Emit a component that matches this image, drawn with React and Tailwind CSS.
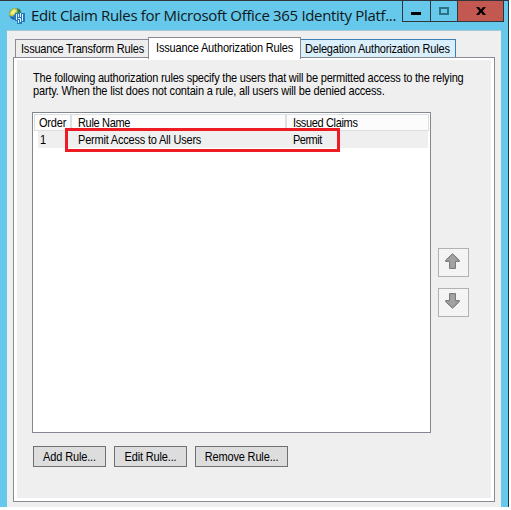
import React from 'react';

function AppIcon() {
  return (
    <svg className="block h-4 w-4 shrink-0" viewBox="0 0 16 16">
      <circle cx="6" cy="6" r="6" fill="#2b83c6" />
      <path d="M0 6Q1 1 5 0L9 1 8 5 5 7 3 9 1 8Z" fill="#b9c63c" />
      <path d="M1.5 5.5Q2.5 2 6 1.2L7 3 5 6 3 7Z" fill="#f8ee90" />
      <path d="M8 0l3 1.5 1.5 3-3 1z" fill="#2f7f4c" />
      <path d="M1 8L4 9 7 12 3 11Z" fill="#2565a8" />
      <path d="M6 5h10v9h-3v2H8v-3H6z" fill="#2878bd" />
      <path d="M7 6h1v6H7zM9 6h1v3H9zM11 5h1v4h-1zM13 6h1v7h-1zM9 10h2v1H9zM11 10h1v4h-1zM9 12h1v3H9z" fill="#d9f2ff" />
    </svg>
  );
}

function Arrow({ down }) {
  return (
    <svg className={down ? 'block h-4 w-[15px] rotate-180' : 'block h-4 w-[15px]'} viewBox="0 0 15 16">
      <path d="M7.5 .7L14.4 7.3V8.5H10.5V15.5H4.5V8.5H.6V7.3Z" fill="#989898" stroke="#7c7c7c" />
      <path d="M7.5 2.3L12 7.2H9.5V14.4H5.5V7.2H3Z" fill="#a3a3a3" />
    </svg>
  );
}

/* Slightly tall, narrow lettering used by the classic dialog face. */
function T({ children, className = 'tracking-[-0.2px]' }) {
  return <span className={`block origin-center scale-y-[1.1] whitespace-nowrap ${className}`}>{children}</span>;
}

function Button({ children, className }) {
  return (
    <button className={`flex h-[21px] items-center justify-center border border-[#707070] bg-[#dddddd] pt-px ${className}`}>
      <T className="tracking-[-0.15px]">{children}</T>
    </button>
  );
}

export default function App() {
  return (
    <div className="h-[510px] w-[511px] overflow-hidden bg-white font-['Liberation_Sans',sans-serif] text-[11px] leading-[13px] text-black">
      <div className="flex h-[507px] w-[509px] flex-col border-r border-t border-[#30343b] bg-[#66c8ea]">
        <header className="flex h-[29px] shrink-0 items-start">
          <div className="flex h-[29px] w-[402px] items-center pl-[9px]">
            <AppIcon />
            <h1 className="ml-[6px] whitespace-nowrap pb-[2px] font-['Open_Sans',sans-serif] text-[15px] leading-5 tracking-[-0.33px] text-[#101820]">
              Edit Claim Rules for Microsoft Office 365 Identity Platf...
            </h1>
          </div>
          <div className="flex h-[21px] border-x border-b border-[#30343b]">
            <button className="flex w-[27px] items-center justify-center pr-px pt-[4px]">
              <span className="h-[3px] w-[10px] bg-black" />
            </button>
            <button className="flex w-[27px] items-center justify-center border-l border-[#30343b]">
              <span className="h-2 w-[10px] border-2 border-[#2f7084]" />
            </button>
            <button className="flex w-[46px] items-center justify-center border-l border-[#30343b] bg-[#c35850]">
              <svg className="block h-2 w-[10px]" viewBox="0 0 10 8">
                <path d="M0 0H3L5 2.4 7 0H10L6.7 4 10 8H7L5 5.6 3 8H0L3.3 4Z" fill="#000" />
              </svg>
            </button>
          </div>
        </header>

        <main className="ml-[7px] w-[494px] flex-1 border-t border-[#a8c8d5] bg-[#efefef] pl-[6px] pt-[6px]">
          <nav className="relative z-10 -mb-[2px] flex h-[22px] items-start pl-[2px]">
            <div className="mt-[2px] flex h-[18px] w-[133px] items-center border-l border-t border-[#898c95] bg-[#eeeeee] pl-[5px] pt-px">
              <T>Issuance Transform Rules</T>
            </div>
            <div className="flex h-[22px] w-[153px] items-start border-x border-t border-[#898c95] bg-white pl-[7px] pt-[4px]">
              <T className="tracking-[-0.17px]">Issuance Authorization Rules</T>
            </div>
            <div className="mt-[2px] flex h-[18px] w-[155px] items-center border-r border-t border-[#3c7fb1] bg-[#d9effb] pl-[4px] pt-px">
              <T className="tracking-[-0.19px]">Delegation Authorization Rules</T>
            </div>
          </nav>

          <section className="h-[445px] w-[482px] border border-[#898c95] bg-white p-[3px] pt-[2px]">
            <div className="h-full bg-[#efefef] pl-[15px] pt-[12px]">
              <div className="ml-px">
                <T className="tracking-[-0.21px]">The following authorization rules specify the users that will be permitted access to the relying</T>
                <T className="tracking-[-0.17px]">party. When the list does not contain a rule, all users will be denied access.</T>
              </div>

              <div className="mt-[14px] flex">
                <div className="relative h-[321px] w-[399px] border border-[#828790] bg-white p-px">
                  <div className="flex h-[17px] border border-[#dedfe1] bg-[#fcfcfc]">
                    <div className="w-[37px] border-r-2 border-[#dedfe1] pl-[4px] pt-[2px]"><T>Order</T></div>
                    <div className="w-[215px] border-r-2 border-[#dedfe1] pl-[6px] pt-[2px]"><T className="tracking-[-0.33px]">Rule Name</T></div>
                    <div className="pl-[6px] pt-[2px]"><T className="tracking-[-0.35px]">Issued Claims</T></div>
                  </div>
                  <div className="ml-[4px] mr-px flex h-[17px] items-center bg-[#efefef] pt-px">
                    <div className="w-[40px] pl-[2px]"><T>1</T></div>
                    <div className="w-[215px]"><T>Permit Access to All Users</T></div>
                    <T className="tracking-[-0.5px]">Permit</T>
                  </div>
                  <div className="absolute left-[32px] top-[15px] h-[24px] w-[275px] border-[3px] border-[#ed1c24]" />
                </div>
                <div className="flex flex-col gap-[11px] pl-[7px] pt-[136px]">
                  <button className="flex h-[29px] w-[31px] items-center justify-center border border-[#adb2b5] bg-[#f4f4f4] pb-[3px] pr-[2px]"><Arrow /></button>
                  <button className="flex h-[29px] w-[31px] items-center justify-center border border-[#adb2b5] bg-[#f4f4f4] pb-[3px] pr-[2px]"><Arrow down /></button>
                </div>
              </div>

              <div className="ml-px mt-[13px] flex gap-[8px]">
                <Button className="w-[73px]">Add Rule...</Button>
                <Button className="w-[73px]">Edit Rule...</Button>
                <Button className="w-[93px]">Remove Rule...</Button>
              </div>
            </div>
          </section>
        </main>
      </div>
    </div>
  );
}
